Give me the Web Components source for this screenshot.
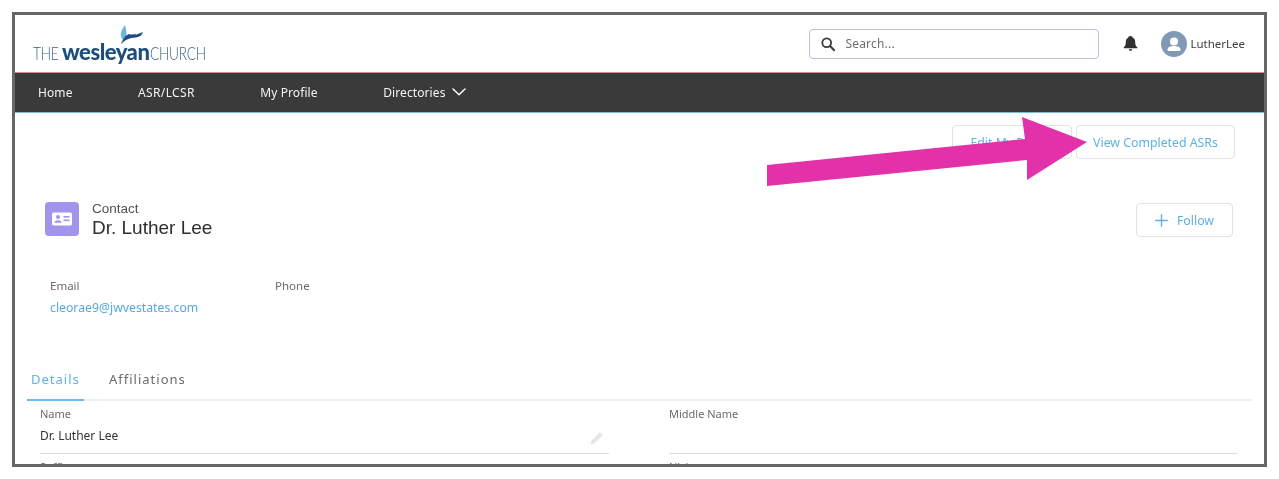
<!DOCTYPE html>
<html lang="en"><head><meta charset="utf-8"><title>Contact</title>
<style>
html,body{margin:0;background:#fff;font-family:"Open Sans","Noto Sans",sans-serif;}
</style></head><body>
<app-frame>
  <site-header></site-header>
  <site-nav></site-nav>
  <page-actions></page-actions>
  <contact-head></contact-head>
  <contact-summary></contact-summary>
  <detail-tabs></detail-tabs>
  <detail-grid></detail-grid>
  <callout-arrow></callout-arrow>
</app-frame>
<script>
const SANS='"Noto Sans","Open Sans",sans-serif';
function def(name,css,html){
  customElements.define(name,class extends HTMLElement{
    constructor(){super();const r=this.attachShadow({mode:'open'});
      r.innerHTML='<style>'+css+'</style>'+html;}
  });
}
def('app-frame',`:host{display:block;position:relative;box-sizing:border-box;margin:12px 0 0 12px;width:1255px;height:455px;border:3px solid #666;overflow:hidden;background:#fff;filter:blur(.35px)}`,`<slot></slot>`);

def('site-header',`:host{display:flex;align-items:center;box-sizing:border-box;height:58px;padding:0 19px 0 18px;border-bottom:1px solid #d98a8a;font-family:${SANS}}
.logo{position:relative;display:flex;align-items:baseline;align-self:flex-start;padding-top:26px;line-height:22px;font-family:Lato,sans-serif;white-space:nowrap}
.l{display:inline-block;font-size:17.500px;font-weight:300;color:#3c5f80;letter-spacing:-.3px;transform:scaleX(.78);transform-origin:0 50%}
.the{width:25px}.ch{width:55px}
.b{font-size:22px;font-weight:900;letter-spacing:-.5px;margin:0 1px 0 4px;color:#1d4d7a}
.logo svg{position:absolute;left:85px;top:9px}
.sp{flex:1}
.search{display:flex;align-items:center;box-sizing:border-box;width:290px;height:30px;border:1px solid #b9bfd9;border-radius:4px;padding-left:11px;font-size:12px;color:#706e6b;gap:10px;letter-spacing:.2px}
.bell{margin-left:23px;display:block}
.av{margin-left:22px;width:26px;height:26px;border-radius:50%;background:#8199b5;overflow:hidden}
.av svg{display:block}
.u{margin-left:3px;font-size:11.500px;color:#3e3e3c}`,
`<div class="logo"><span class="l the">THE</span><span class="b">wesleyan</span><span class="l ch">CHURCH</span>
<svg width="28" height="22" viewBox="0 0 28 22"><path d="M7 1C4 5 2 9 3 12.500 3.600 14.500 5.200 16 6.500 17 8.500 14 9.500 9.500 7 1Z" fill="#6db4e4"/><path d="M3 20C5 14.500 8 10.800 11 10 13.500 10.800 16 10.800 18 9.500L17.200 11 25 8C24 11 22 13 18 13.500 12 14 7 15.500 3 20Z" fill="#1d4d7a"/></svg></div>
<div class="sp"></div>
<div class="search"><svg width="14" height="14" viewBox="0 0 14 14"><circle cx="5.700" cy="5.700" r="4.400" fill="none" stroke="#3a3a3a" stroke-width="1.800"/><path d="M9 9l4.200 4.200" stroke="#3a3a3a" stroke-width="2" stroke-linecap="round"/></svg><span>Search...</span></div>
<svg class="bell" width="17" height="17" viewBox="0 0 17 17"><path d="M8.500 1C6.800 1 6.300 2 6.200 2.800 4.400 3.600 3.800 5.200 3.800 7c0 2.800-.5 4-2 5.200-.4.400-.2 1 .4 1h12.600c.6 0 .8-.6.400-1-1.500-1.200-2-2.400-2-5.200 0-1.800-.6-3.400-2.400-4.200C10.700 2 10.200 1 8.500 1Z" fill="#2f2f2f"/><path d="M6.700 14.200c.2 1 .9 1.600 1.800 1.600s1.600-.6 1.800-1.600Z" fill="#2f2f2f"/></svg>
<div class="av"><svg width="26" height="26" viewBox="0 0 26 26"><circle cx="13" cy="10.500" r="4" fill="#fff"/><path d="M6.500 19c0-2.800 2.500-3.900 6.500-3.900s6.500 1.100 6.500 3.900c0 .6-.4 1-1 1h-11c-.6 0-1-.4-1-1Z" fill="#fff"/></svg></div>
<span class="u">LutherLee</span>`);

def('site-nav',`:host{display:flex;align-items:center;box-sizing:border-box;height:40px;background:#3a3a3a;border-bottom:1px solid #7fb6dc;padding:0 0 1px 23px;color:#fff;font-family:${SANS};font-size:12px;letter-spacing:.1px;gap:65.500px}
span{display:inline-flex;align-items:center;gap:6px;color:#f3f3f3}
.w{letter-spacing:.35px}`,
`<span>Home</span><span class="w">ASR/LCSR</span><span>My Profile</span><span>Directories<svg width="14" height="8" viewBox="0 0 14 8"><path d="M1 1l6 5.800L13 1" fill="none" stroke="#fff" stroke-width="1.500" stroke-linecap="round"/></svg></span>`);

def('sf-button',`:host{display:inline-flex;align-items:center;justify-content:center;box-sizing:border-box;height:34px;border:1px solid #e2e2e2;border-radius:4px;color:#5fb0e5;font-family:${SANS};font-size:12.300px;background:#fff;gap:9px;white-space:nowrap}`,`<slot></slot>`);

def('page-actions',`:host{display:flex;justify-content:flex-end;gap:4px;padding:12px 29px 0 0}
.e{width:120px}.c{width:159px}`,
`<sf-button class="e">Edit My Profile</sf-button><sf-button class="c">View Completed ASRs</sf-button>`);

def('contact-head',`:host{display:flex;align-items:flex-start;padding:43px 31px 0 30px}
.ic{width:34px;height:34px;border-radius:4px;background:#a094ed;display:flex;align-items:center;justify-content:center}
.t{margin:-1px 0 0 13px;font-family:"Liberation Sans",Arial,sans-serif;flex:1}
.k{font-size:13.500px;line-height:15px;color:#54524f}
.n{font-size:19px;line-height:22px;color:#2f2f2f;margin-top:1px;margin-bottom:-1px}
sf-button{width:97px;margin-top:1px}
svg.p{display:block}`,
`<div class="ic"><svg width="22" height="16" viewBox="0 0 22 16"><rect x="1" y="1.500" width="20" height="13" rx="1.800" fill="#fff"/><circle cx="7" cy="6" r="2" fill="#a094ed"/><path d="M3.500 11.800c0-1.700 1.500-2.500 3.500-2.500s3.500.8 3.500 2.500Z" fill="#a094ed"/><rect x="12.500" y="5" width="6" height="1.600" fill="#a094ed"/><rect x="12.500" y="8.500" width="6" height="1.600" fill="#a094ed"/></svg></div>
<div class="t"><div class="k">Contact</div><div class="n">Dr. Luther Lee</div></div>
<sf-button><svg class="p" width="13" height="13" viewBox="0 0 14 14"><path d="M7 .8v12.400M.8 7h12.400" stroke="#5fb0e5" stroke-width="1.500" stroke-linecap="round"/></svg><span>Follow</span></sf-button>`);

def('contact-summary',`:host{display:grid;grid-template-columns:225px 200px;padding:41px 0 0 35px;font-family:${SANS};font-size:11.500px}
.k{color:#6b6b6b;line-height:14px;height:21px}
.v{color:#56a8de;font-size:12.250px;line-height:16px}`,
`<div><div class="k">Email</div><div class="v">cleorae9@jwvestates.com</div></div><div><div class="k">Phone</div></div>`);

def('detail-tabs',`:host{display:flex;box-sizing:border-box;height:44px;margin:41px 13px 0 12px;border-bottom:2px solid #eeeeee;font-family:${SANS};font-size:13px;letter-spacing:1px;color:#6b6b6b}
a{display:flex;align-items:center;box-sizing:border-box;height:44px;padding:2px 4px 2px 4px}
.on{color:#63b2e6;border-bottom:2px solid #6db9ea;width:57px;padding-bottom:0}
.off{margin-left:21px}`,
`<a class="on">Details</a><a class="off">Affiliations</a>`);

def('detail-grid',`:host{display:grid;grid-template-columns:569px 568px;column-gap:60px;padding:5px 0 0 25px;font-family:${SANS}}
.f{position:relative;box-sizing:border-box;height:48px;border-bottom:1px solid #dedede}
.k{font-size:11px;line-height:15px;color:#6b6b6b}
.v{font-size:12px;line-height:16px;color:#333;padding-top:7px}
svg{position:absolute;right:4px;bottom:7px}
.n{height:30px;padding-top:5px}`,
`<div class="f"><div class="k">Name</div><div class="v">Dr. Luther Lee</div><svg width="16" height="16" viewBox="0 0 16 16"><path d="M1.500 14.500l1-3.800 8.500-8.500 2.800 2.800-8.500 8.500Z" fill="#e6e6e6"/></svg></div>
<div class="f"><div class="k">Middle Name</div></div>
<div class="n"><div class="k">Suffix</div></div><div class="n"><div class="k">Nickname</div></div>`);

def('callout-arrow',`:host{position:absolute;left:0;top:0;display:block;pointer-events:none}svg{display:block}`,
`<svg width="1260" height="460" viewBox="15 15 1260 460"><polygon points="767,165 1025,139 1022,117 1087,142 1027,180 1027,160 767,186" fill="#e332a9"/></svg>`);
</script>
</body></html>
